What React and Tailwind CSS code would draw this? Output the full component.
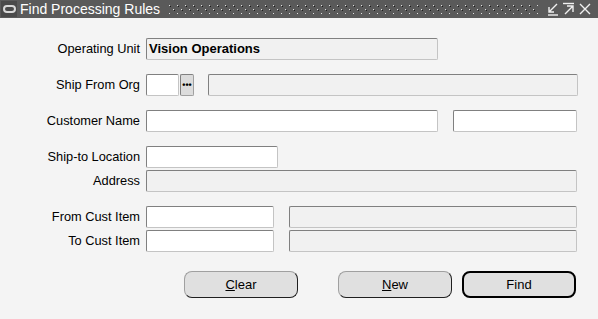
const font = "font-['Liberation_Sans',Arial,sans-serif]";

function Field({ w, grey, children, className = "" }) {
  return (
    <div
      className={`h-[22px] ${w} shrink-0 rounded-[2px] border border-t-[#808080] border-l-[#808080] border-r-[#c4c4c4] border-b-[#c4c4c4] ${
        grey ? "bg-[#f1f1f1]" : "bg-white"
      } flex items-center px-[2px] text-[13px] ${className}`}
    >
      {children}
    </div>
  );
}

function Label({ children }) {
  return (
    <div className="w-[141px] shrink-0 pr-[1px] text-right text-[12.8px] text-black">
      {children}
    </div>
  );
}

function Button({ children, primary, className = "" }) {
  return (
    <button
      className={`h-[27px] w-[114px] rounded-[8px] bg-[#e0e0e0] text-[13px] text-black ${
        primary
          ? "border-2 border-black"
          : "border border-t-[#a0a0a0] border-l-[#a0a0a0] border-r-[#202020] border-b-[#202020]"
      } ${className}`}
    >
      {children}
    </button>
  );
}

function TitleBar() {
  return (
    <div className="flex h-[18px] items-center bg-[#5a5a5a]">
      <div className="ml-[1px] flex h-[16px] w-[16px] items-center justify-center bg-[#4a4a4a]">
        <div className="h-[8px] w-[13px] rounded-full border-2 border-[#d8d8d8]" />
      </div>
      <div className="ml-[3px] text-[14px] leading-none text-white">Find Processing Rules</div>
      <svg className="ml-[9px] h-[10px] flex-1" preserveAspectRatio="none">
        <defs>
          <pattern id="dots" width="8" height="8" patternUnits="userSpaceOnUse">
            <rect x="0" y="1" width="1" height="1" fill="#e0e0e0" />
            <rect x="1" y="2" width="1" height="1" fill="#1a1a1a" />
            <rect x="4" y="5" width="1" height="1" fill="#e0e0e0" />
            <rect x="5" y="6" width="1" height="1" fill="#1a1a1a" />
          </pattern>
        </defs>
        <rect x="0" y="0" width="100%" height="100%" fill="url(#dots)" />
      </svg>
      <svg width="50" height="14" viewBox="0 0 50 14" className="ml-[8px] mr-[2px]">
        <g stroke="#f0f0f0" strokeWidth="1.4" fill="none">
          <path d="M11 2 L3 10 M3 5 V10 H8" />
          <path d="M2 13 H12" />
          <path d="M17 1.5 H28" />
          <path d="M19 12 L27 4 M21 4 H27 V10" />
          <path d="M34 2 L44 12 M44 2 L34 12" />
        </g>
      </svg>
    </div>
  );
}

export default function App() {
  return (
    <div className={`h-[319px] w-[598px] overflow-hidden bg-[#f4f4f4] ${font}`}>
      <TitleBar />
      <div className="flex flex-col">
        <div className="mt-[20px] flex items-center gap-[5px]">
          <Label>Operating Unit</Label>
          <Field w="w-[292px]" grey className="font-bold">
            Vision Operations
          </Field>
        </div>

        <div className="mt-[14px] flex items-center">
          <Label>Ship From Org</Label>
          <Field w="w-[33px]" className="ml-[5px]" />
          <div className="ml-[1px] flex h-[22px] w-[14px] items-center justify-center rounded-[2px] border border-t-[#808080] border-l-[#808080] border-r-[#a0a0a0] border-b-[#a0a0a0] bg-[#dcdcdc] text-[9px] font-bold leading-none">
            •••
          </div>
          <Field w="w-[370px]" grey className="ml-[14px]" />
        </div>

        <div className="mt-[14px] flex items-center">
          <Label>Customer Name</Label>
          <Field w="w-[292px]" className="ml-[5px]" />
          <Field w="w-[124px]" className="ml-[15px]" />
        </div>

        <div className="mt-[14px] flex items-center">
          <Label>Ship-to Location</Label>
          <Field w="w-[132px]" className="ml-[5px]" />
        </div>

        <div className="mt-[2px] flex items-center">
          <Label>Address</Label>
          <Field w="w-[431px]" grey className="ml-[5px]" />
        </div>

        <div className="mt-[14px] flex items-center">
          <Label>From Cust Item</Label>
          <Field w="w-[128px]" className="ml-[5px]" />
          <Field w="w-[288px]" grey className="ml-[15px]" />
        </div>

        <div className="mt-[2px] flex items-center">
          <Label>To Cust Item</Label>
          <Field w="w-[128px]" className="ml-[5px]" />
          <Field w="w-[288px]" grey className="ml-[15px]" />
        </div>

        <div className="mt-[19px] flex">
          <Button className="ml-[184px]">
            <span className="underline">C</span>lear
          </Button>
          <Button className="ml-[40px]">
            <span className="underline">N</span>ew
          </Button>
          <Button primary className="ml-[10px]">
            Find
          </Button>
        </div>
      </div>
    </div>
  );
}
